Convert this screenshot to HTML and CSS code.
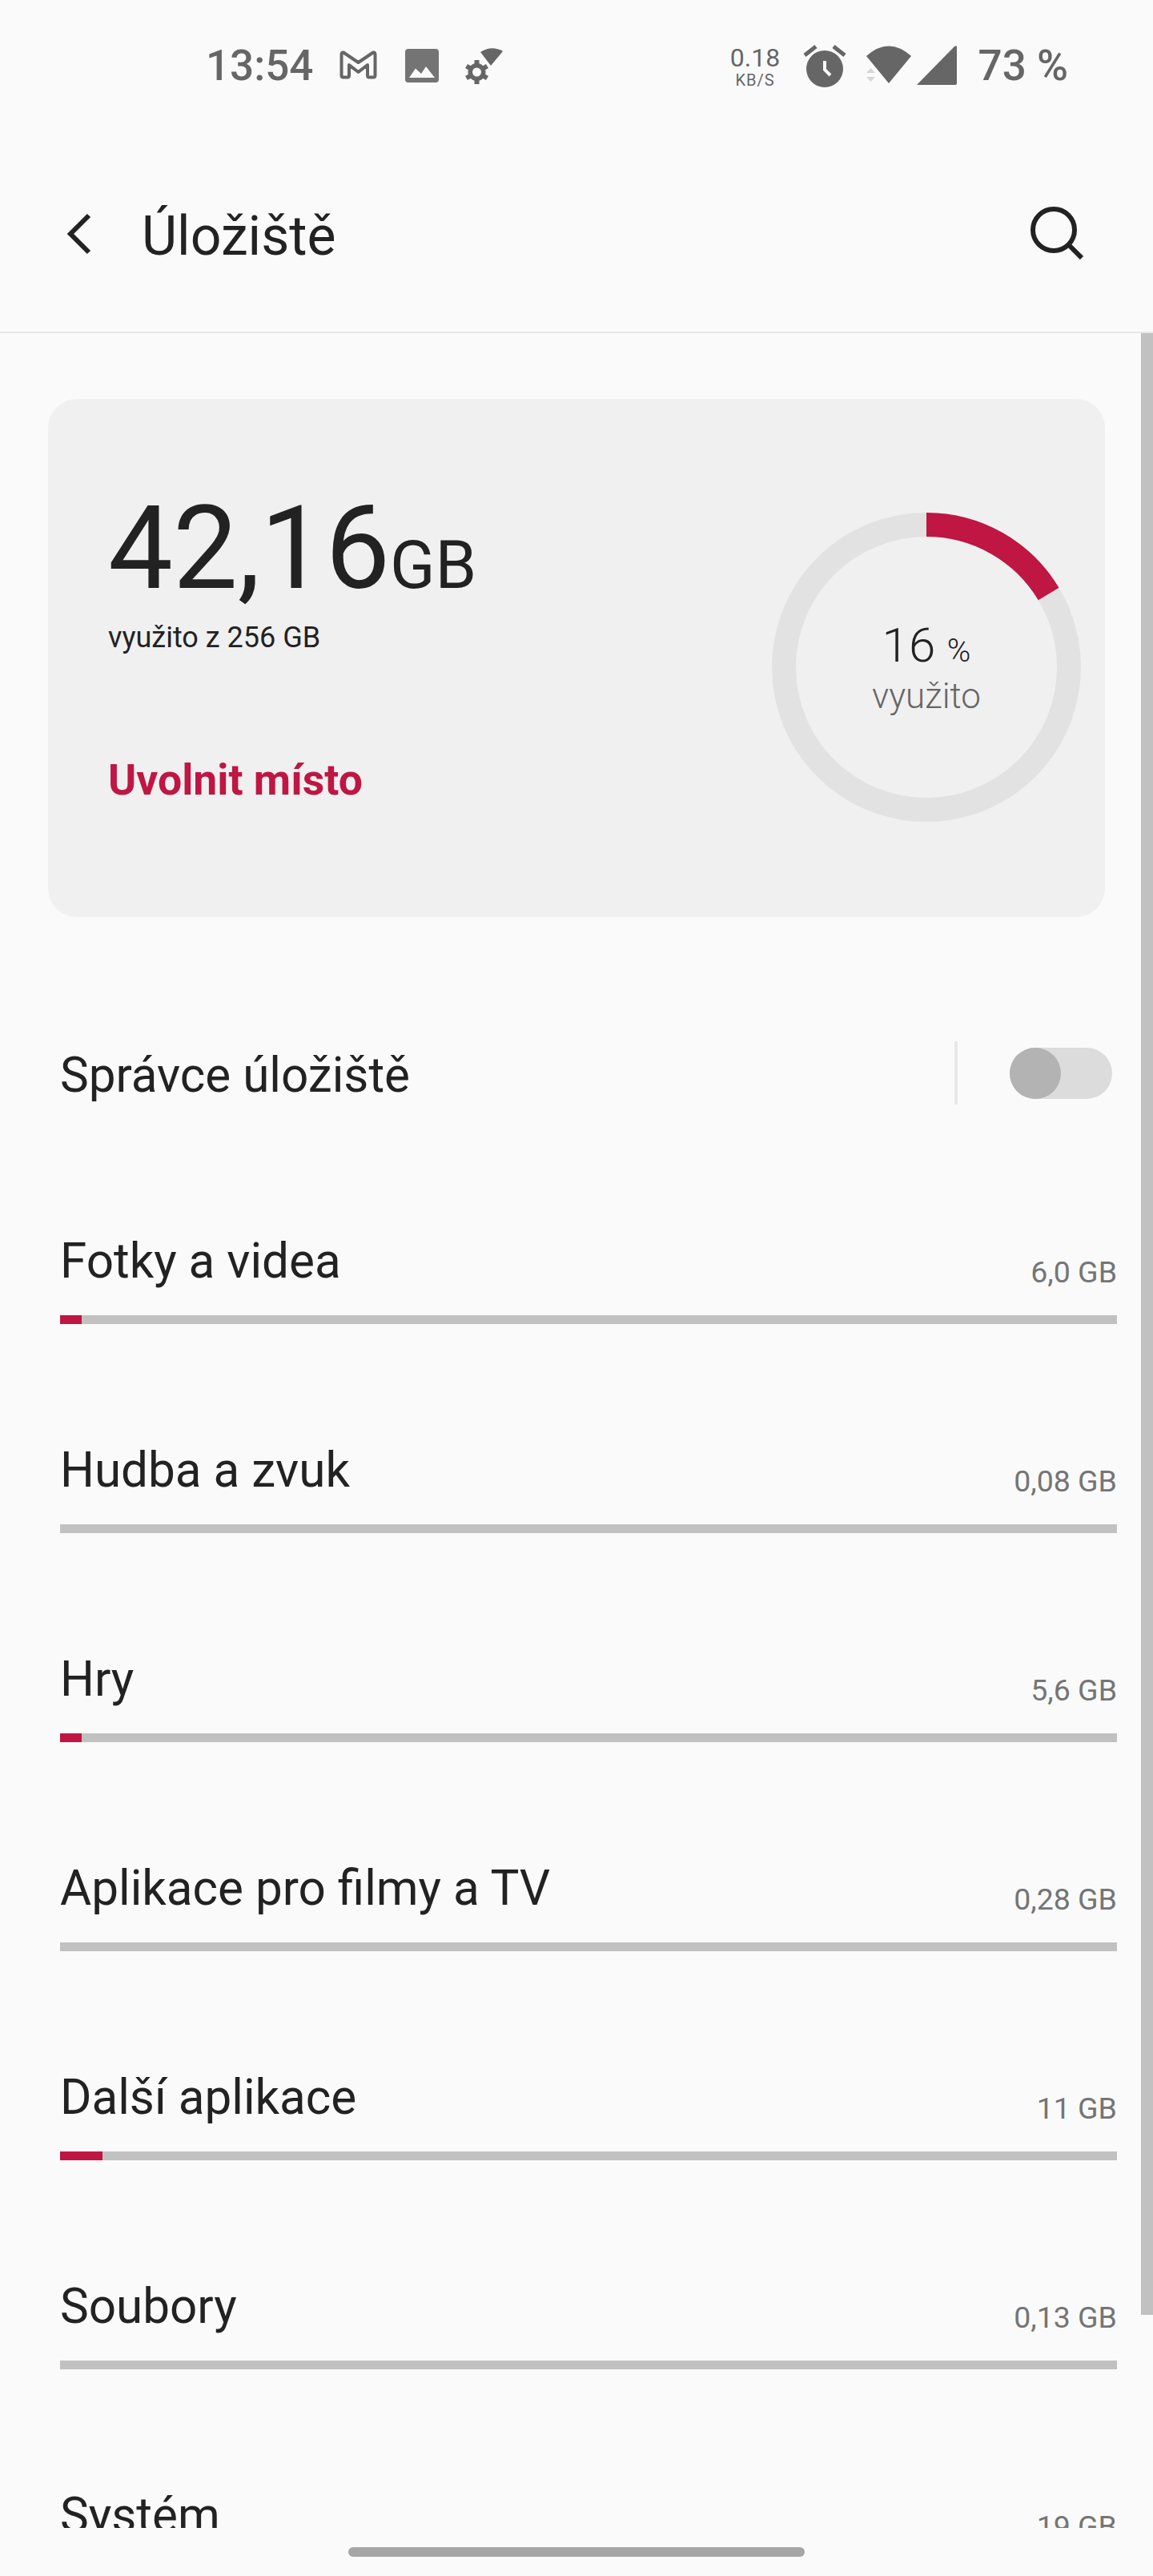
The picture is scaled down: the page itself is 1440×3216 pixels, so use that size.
FILE: index.html
```html
<!DOCTYPE html>
<html lang="cs">
<head>
    <meta charset="UTF-8">
    <meta name="viewport" content="width=device-width, initial-scale=1.0">
    <title>Úložiště</title>
    <link rel="stylesheet" href="styles.css">
</head>
<body>
    <div class="phone">
        <div class="status-bar">
            <span class="clock">13:54</span>
            <svg class="icon-mail" width="47" height="36" viewBox="0 0 47 36">
                <path d="M5 2.500 L23.500 15 L42 2.500 Q44.500 2 44.500 5 V31 Q44.500 33.500 42 33.500 H37 Q35 33.500 35 31 V18 L23.500 27 L12 18 V31 Q12 33.500 10 33.500 H5 Q2.500 33.500 2.500 31 V5 Q2.500 2 5 2.500 Z" fill="none" stroke="#666" stroke-width="4" stroke-linejoin="round"/>
            </svg>
            <svg class="icon-photo" width="42" height="42" viewBox="0 0 42 42">
                <rect width="42" height="42" rx="4" fill="#747474"/>
                <path d="M5 36 L13 24.500 L20 31 L26 22 L37 36 Z" fill="#fafafa"/>
            </svg>
            <svg class="icon-hotspot" width="48" height="47" viewBox="0 0 48 47">
                <path d="M19 6 Q33 -3 47 5 L32 23 Z" fill="#666"/>
                <path d="M14.500 16 V46 M1.500 23.500 L27.500 38.500 M1.500 38.500 L27.500 23.500" stroke="#666" stroke-width="6"/>
                <circle cx="14.500" cy="31" r="11" fill="#666"/>
                <circle cx="14.500" cy="31" r="5.500" fill="#fafafa"/>
            </svg>
            <div class="speed">
                <span class="speed-num">0.18</span>
                <span class="speed-unit">KB/S</span>
            </div>
            <svg class="icon-alarm" width="56" height="54" viewBox="0 0 56 54">
                <circle cx="28" cy="31" r="23" fill="#666"/>
                <path d="M3 14 L17 3 M53 14 L39 3" stroke="#666" stroke-width="5"/>
                <path d="M28 21 V32 L35 39" fill="none" stroke="#fafafa" stroke-width="4"/>
            </svg>
            <svg class="icon-wifi" width="56" height="48" viewBox="0 0 56 48">
                <path d="M0 13 Q28 -12 56 13 L28 47 Z" fill="#666"/>
                <path d="M0 34 L11 34 L5.500 28 Z M0 39 L11 39 L5.500 45 Z" fill="#d6d6d6"/>
            </svg>
            <svg class="icon-signal" width="50" height="50" viewBox="0 0 50 50">
                <path d="M0 50 L47 2 Q50 0 50 3 V48 Q50 50 48 50 Z" fill="#666"/>
            </svg>
            <span class="battery">73 %</span>
        </div>

        <header class="top-bar">
            <div class="top-left">
                <svg class="icon-back" width="32" height="52" viewBox="0 0 32 52">
                    <path d="M29 3 L6 26 L29 49" fill="none" stroke="#222" stroke-width="6"/>
                </svg>
                <h1>Úložiště</h1>
            </div>
            <svg class="icon-search" width="66" height="66" viewBox="0 0 66 66">
                <circle cx="29" cy="29" r="26" fill="none" stroke="#222" stroke-width="6"/>
                <path d="M48 48 L64 64" stroke="#222" stroke-width="6"/>
            </svg>
        </header>

        <main class="content">
            <div class="scrollbar"></div>

            <section class="card">
                <div class="card-info">
                    <div class="used"><span class="used-num">42,16</span><span class="used-unit">GB</span></div>
                    <div class="used-note">využito z 256 GB</div>
                    <div class="free-up">Uvolnit místo</div>
                </div>
                <div class="donut">
                    <svg width="386" height="386" viewBox="0 0 386 386">
                        <circle cx="193" cy="193" r="178" fill="none" stroke="#e2e2e2" stroke-width="30"/>
                        <circle cx="193" cy="193" r="178" fill="none" stroke="#bf1643" stroke-width="30" stroke-dasharray="183.300 1118.400" transform="rotate(-90 193 193)"/>
                    </svg>
                    <div class="donut-text">
                        <div class="donut-num">16 <span class="donut-pct">%</span></div>
                        <div class="donut-label">využito</div>
                    </div>
                </div>
            </section>

            <div class="manager">
                <span class="row-name">Správce úložiště</span>
                <div class="manager-side">
                    <div class="divider"></div>
                    <div class="toggle"><div class="toggle-thumb"></div></div>
                </div>
            </div>

            <div class="rows">
                <div class="row">
                    <div class="row-text"><span class="row-name">Fotky a videa</span><span class="row-size">6,0 GB</span></div>
                    <div class="bar"><div class="bar-fill" style="width: 27px"></div></div>
                </div>
                <div class="row">
                    <div class="row-text"><span class="row-name">Hudba a zvuk</span><span class="row-size">0,08 GB</span></div>
                    <div class="bar"></div>
                </div>
                <div class="row">
                    <div class="row-text"><span class="row-name">Hry</span><span class="row-size">5,6 GB</span></div>
                    <div class="bar"><div class="bar-fill" style="width: 27px"></div></div>
                </div>
                <div class="row">
                    <div class="row-text"><span class="row-name">Aplikace pro filmy a TV</span><span class="row-size">0,28 GB</span></div>
                    <div class="bar"></div>
                </div>
                <div class="row">
                    <div class="row-text"><span class="row-name">Další aplikace</span><span class="row-size">11 GB</span></div>
                    <div class="bar"><div class="bar-fill" style="width: 53px"></div></div>
                </div>
                <div class="row">
                    <div class="row-text"><span class="row-name">Soubory</span><span class="row-size">0,13 GB</span></div>
                    <div class="bar"></div>
                </div>
                <div class="row">
                    <div class="row-text"><span class="row-name">Systém</span><span class="row-size">19 GB</span></div>
                    <div class="bar"></div>
                </div>
            </div>
        </main>

        <div class="nav-area">
            <div class="home-bar"></div>
        </div>
    </div>
</body>
</html>
```

FILE: styles.css
```css
body {
    margin: 0;
    background: #fafafa;
    color: #222;
    font-family: Roboto, "Liberation Sans", sans-serif;
}

.phone {
    width: 1440px;
    height: 3216px;
    display: flex;
    flex-direction: column;
    overflow: hidden;
}

/* status bar */
.status-bar {
    height: 120px;
    padding-right: 106px;
    box-sizing: border-box;
    display: flex;
    align-items: flex-start;
    color: #666;
}

.clock,
.battery {
    font-size: 53px;
    font-weight: 500;
    line-height: 60px;
    margin-top: 52px;
}

.clock {
    margin-left: 257px;
}

.icon-mail {
    margin: 63px 0 0 33px;
}

.icon-photo {
    margin: 61px 0 0 35px;
}

.icon-hotspot {
    margin: 59px 0 0 33px;
}

.speed {
    margin: 54px 0 0 auto;
    width: 59px;
    display: flex;
    flex-direction: column;
    align-items: center;
}

.speed-num {
    font-size: 32px;
    line-height: 36px;
}

.speed-unit {
    font-size: 20px;
    line-height: 20px;
    letter-spacing: 1px;
}

.icon-alarm {
    margin: 55px 0 0 29px;
}

.icon-wifi {
    margin: 57px 0 0 24px;
}

.icon-signal {
    margin: 56px 0 0 7px;
}

.battery {
    margin-left: 27px;
}

/* top bar */
.top-bar {
    height: 294px;
    border-bottom: 2px solid #e6e6e6;
    display: flex;
    justify-content: space-between;
    align-items: flex-start;
}

.top-left {
    display: flex;
    align-items: flex-start;
}

.icon-back {
    margin: 146px 0 0 82px;
}

h1 {
    margin: 135px 0 0 63px;
    font-size: 68px;
    font-weight: 400;
    line-height: 80px;
}

.icon-search {
    margin: 138px 87px 0 0;
}

/* content */
.content {
    position: relative;
    height: 2740px;
    overflow: hidden;
}

.scrollbar {
    position: absolute;
    top: 0;
    right: 0;
    width: 15px;
    height: 2474px;
    background: #c1c1c1;
}

.card {
    margin: 82px 60px 0;
    height: 647px;
    padding: 0 30px 0 75px;
    box-sizing: border-box;
    background: #f0f0f1;
    border-radius: 36px;
    display: flex;
    justify-content: space-between;
    align-items: flex-start;
}

.card-info {
    padding-top: 102px;
}

.used {
    height: 170px;
    line-height: 170px;
    white-space: nowrap;
}

.used-num {
    font-size: 144px;
}

.used-unit {
    font-size: 83px;
}

.used-note {
    margin-top: 6px;
    font-size: 36px;
    line-height: 40px;
}

.free-up {
    margin-top: 128px;
    font-size: 53.500px;
    font-weight: 700;
    line-height: 60px;
    color: #bf1643;
}

.donut {
    margin-top: 142px;
    display: grid;
}

.donut svg,
.donut-text {
    grid-area: 1 / 1;
}

.donut svg {
    display: block;
}

.donut-text {
    padding-top: 138px;
    text-align: center;
    font-weight: 300;
}

.donut-num {
    font-size: 60px;
    line-height: 56px;
}

.donut-pct {
    font-size: 40px;
}

.donut-label {
    font-size: 44px;
    line-height: 56px;
    color: #666;
}

/* list */
.manager {
    height: 234px;
    margin-top: 155px;
    box-sizing: border-box;
    padding: 0 51px 0 75px;
    display: flex;
    justify-content: space-between;
    align-items: flex-start;
}

.manager .row-name {
    margin-top: 8px;
}

.manager-side {
    display: flex;
    align-items: center;
    height: 79px;
    gap: 65px;
}

.divider {
    width: 4px;
    height: 79px;
    background: #e8e8e8;
}

.toggle {
    width: 128px;
    height: 64px;
    border-radius: 32px;
    background: #dcdcdc;
}

.toggle-thumb {
    width: 64px;
    height: 64px;
    border-radius: 50%;
    background: #b3b3b3;
}

.rows {
    padding: 0 45px 0 75px;
}

.row {
    height: 261px;
}

.row-text {
    height: 108px;
    padding-top: 6px;
    box-sizing: border-box;
    display: flex;
    justify-content: space-between;
    align-items: flex-start;
}

.row-name {
    font-size: 60.200px;
    line-height: 70px;
}

.row-size {
    margin-top: 28px;
    font-size: 37.500px;
    line-height: 40px;
    color: #757575;
}

.bar {
    height: 11px;
    background: #c1c1c1;
}

.bar-fill {
    height: 100%;
    background: #bf1643;
}

/* bottom */
.nav-area {
    flex: 1;
    padding-top: 24px;
}

.home-bar {
    width: 570px;
    height: 12px;
    margin: 0 auto;
    border-radius: 6px;
    background: #a6a6a6;
}
```
